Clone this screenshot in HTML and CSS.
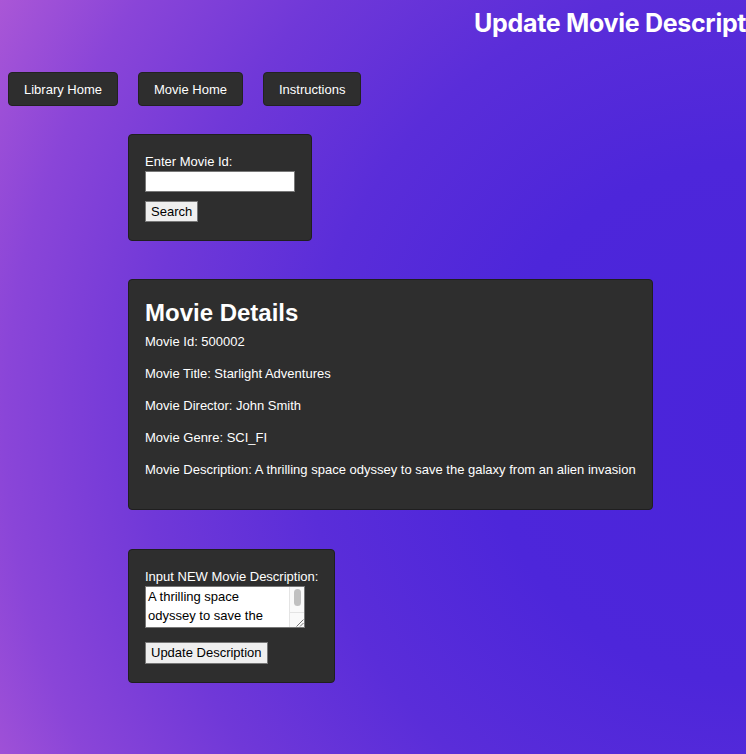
FILE: index.html
```html
<!DOCTYPE html>
<html>
<head>
<meta charset="utf-8">
<link rel="stylesheet" href="styles.css">
</head>
<body>
<header class="top">
  <h1 class="title">Update Movie Description</h1>
</header>
<nav class="nav">
  <button class="nav-btn">Library Home</button>
  <button class="nav-btn">Movie Home</button>
  <button class="nav-btn">Instructions</button>
</nav>
<main class="main">
  <section class="card search-card">
    <label class="label" for="mid">Enter Movie Id:</label>
    <input class="text-input" id="mid" type="text">
    <button class="form-btn">Search</button>
  </section>
  <section class="card details-card">
    <h2 class="details-title">Movie Details</h2>
    <p class="detail">Movie Id: 500002</p>
    <p class="detail">Movie Title: Starlight Adventures</p>
    <p class="detail">Movie Director: John Smith</p>
    <p class="detail">Movie Genre: SCI_FI</p>
    <p class="detail">Movie Description: A thrilling space odyssey to save the galaxy from an alien invasion</p>
  </section>
  <section class="card update-card">
    <label class="label" for="desc">Input NEW Movie Description:</label>
    <div class="area-wrap">
      <textarea class="desc-area" id="desc">A thrilling space odyssey to save the galaxy from an alien invasion</textarea>
      <div class="fake-scroll">
        <div class="thumb"></div>
        <div class="corner">
          <svg class="grip" width="9" height="9" viewBox="0 0 9 9"><path d="M8.5 1.5 L1.5 8.5 M8.5 5 L5 8.5" stroke="#777" stroke-width="1" fill="none"/></svg>
        </div>
      </div>
    </div>
    <button class="form-btn update-btn">Update Description</button>
  </section>
</main>
</body>
</html>
```
FILE: styles.css
```css
html, body {
  height: 100%;
}
body {
  margin: 0;
  padding: 8px;
  box-sizing: border-box;
  min-height: 754px;
  overflow: hidden;
  font-family: "Liberation Sans", Arial, sans-serif;
  color: #ffffff;
  background: radial-gradient(circle at 100% 56%, #4a24da 0px, #4d26da 260px, #5a2dd9 440px, #7038d8 600px, #8a45d8 740px, #b05ad6 880px);
}
.top {
  height: 36px;
  padding-left: 466px;
  white-space: nowrap;
}
.title {
  margin: 0;
  font-family: Inter, "Liberation Sans", sans-serif;
  font-size: 25px;
  line-height: 30px;
  font-weight: 700;
  letter-spacing: -0.3px;
}
.nav {
  display: flex;
  gap: 20px;
  margin-top: 28px;
}
.nav-btn {
  height: 34px;
  padding: 0 15px;
  border: 1px solid #222;
  border-radius: 4px;
  background: #2e2e2e;
  color: #fff;
  font-family: "Liberation Sans", Arial, sans-serif;
  font-size: 13px;
}
.main {
  display: flex;
  flex-direction: column;
  align-items: flex-start;
  gap: 38px;
  margin-top: 28px;
  padding-left: 120px;
}
.card {
  box-sizing: border-box;
  background: #2e2e2e;
  border: 1px solid #1f1f1f;
  border-radius: 4px;
  padding: 18px 16px;
  display: flex;
  flex-direction: column;
  align-items: flex-start;
  white-space: nowrap;
}
.search-card {
  width: 184px;
  height: 107px;
}
.label {
  font-size: 13px;
  line-height: 18px;
}
.text-input {
  box-sizing: border-box;
  width: 150px;
  height: 22px;
  margin: 0;
  border: 1px solid #777;
  background: #fff;
  padding: 1px 2px;
}
.form-btn {
  box-sizing: border-box;
  margin-top: 9px;
  height: 23px;
  padding: 0 5px;
  border: 1px solid #777;
  border-radius: 0;
  background: #efefef;
  color: #000;
  font-family: "Liberation Sans", Arial, sans-serif;
  font-size: 13px;
}
.details-card {
  width: 525px;
  height: 231px;
  padding-top: 18px;
}
.details-title {
  margin: 0 0 6px;
  font-size: 24px;
  line-height: 30px;
  font-weight: 700;
}
.detail {
  margin: 0 0 16px;
  font-size: 13px;
  line-height: 16px;
}
.update-card {
  width: 207px;
  height: 134px;
  margin-top: 1px;
  padding-top: 18px;
}
.area-wrap {
  box-sizing: border-box;
  display: flex;
  width: 160px;
  height: 43px;
  border: 1px solid #777;
  background: #fff;
}
.desc-area {
  flex: 1;
  min-width: 0;
  margin: 0;
  padding: 0 2px;
  border: none;
  outline: none;
  background: #fff;
  color: #000;
  font-family: "Liberation Sans", Arial, sans-serif;
  font-size: 13px;
  line-height: 19px;
  white-space: pre-wrap;
  resize: none;
  overflow: hidden;
}
.fake-scroll {
  box-sizing: border-box;
  width: 15px;
  display: flex;
  flex-direction: column;
  justify-content: space-between;
  background: #fafafa;
  border-left: 1px solid #e4e4e4;
}
.thumb {
  width: 7px;
  height: 17px;
  margin: 2px auto 0;
  border-radius: 4px;
  background: #c1c1c1;
}
.corner {
  height: 14px;
  border-top: 1px solid #e4e4e4;
  display: flex;
  justify-content: flex-end;
  align-items: flex-end;
}
.grip {
  display: block;
}
.update-btn {
  margin-top: 14px;
}
```
